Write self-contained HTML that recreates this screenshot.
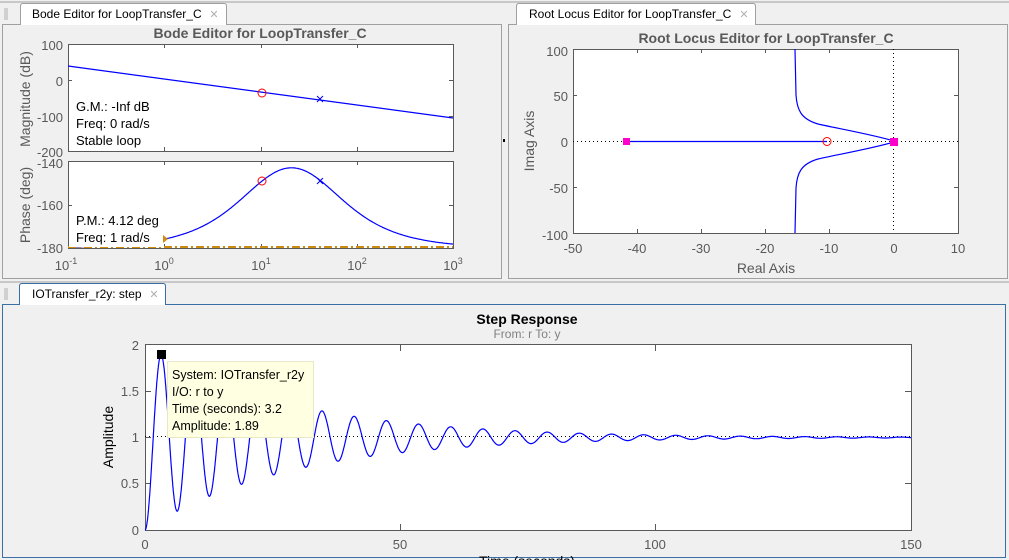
<!DOCTYPE html>
<html><head><meta charset="utf-8"><style>
html,body{margin:0;padding:0;width:1009px;height:560px;overflow:hidden;background:#f0f0f0}
svg{display:block;font-family:"Liberation Sans",sans-serif}
</style></head><body>
<svg width="1009" height="560" viewBox="0 0 1009 560" xmlns="http://www.w3.org/2000/svg">
<rect width="1009" height="560" fill="#f0f0f0"/>
<line x1="0" y1="2" x2="505" y2="2" stroke="#a0a0a0"/>
<rect x="2.5" y="24.5" width="499" height="254" fill="#f0f0f0" stroke="#a0a0a0"/>
<g stroke="#b0b0b0"><line x1="5" y1="8" x2="5" y2="20"/><line x1="7" y1="8" x2="7" y2="20"/></g>
<path d="M20.5,25 V6 Q20.5,3.5 23,3.5 H224 Q226.5,3.5 226.5,6 V25" fill="#fff" stroke="#a0a0a0"/>
<text x="32" y="18" font-size="12" fill="#000">Bode Editor for LoopTransfer_C</text>
<text x="214" y="18" font-size="11" fill="#b0b0b0" text-anchor="middle">✕</text>
<text x="260" y="38" font-size="14" font-weight="bold" fill="#595959" text-anchor="middle">Bode Editor for LoopTransfer_C</text>
<rect x="68.5" y="44.5" width="385" height="107" fill="#fff" stroke="#595959"/>
<rect x="68.5" y="161.5" width="385" height="87" fill="#fff" stroke="#595959"/>
<g stroke="#595959">
<line x1="164.5" y1="44" x2="164.5" y2="48"/><line x1="261.5" y1="44" x2="261.5" y2="48"/><line x1="357.5" y1="44" x2="357.5" y2="48"/>
<line x1="164.5" y1="151" x2="164.5" y2="147"/><line x1="261.5" y1="151" x2="261.5" y2="147"/><line x1="357.5" y1="151" x2="357.5" y2="147"/>
<line x1="164.5" y1="161" x2="164.5" y2="165"/><line x1="261.5" y1="161" x2="261.5" y2="165"/><line x1="357.5" y1="161" x2="357.5" y2="165"/>
<line x1="164.5" y1="248" x2="164.5" y2="244"/><line x1="261.5" y1="248" x2="261.5" y2="244"/><line x1="357.5" y1="248" x2="357.5" y2="244"/>
<line x1="68" y1="80.5" x2="72" y2="80.5"/><line x1="68" y1="116.5" x2="72" y2="116.5"/><line x1="453" y1="80.5" x2="449" y2="80.5"/><line x1="453" y1="116.5" x2="449" y2="116.5"/>
<line x1="68" y1="205.5" x2="72" y2="205.5"/><line x1="453" y1="205.5" x2="449" y2="205.5"/>
</g>
<g font-size="13" fill="#595959" text-anchor="end">
<text x="63" y="50">100</text><text x="63" y="86">0</text><text x="63" y="122">-100</text><text x="63" y="157">-200</text>
<text x="63" y="168">-140</text><text x="63" y="210">-160</text><text x="63" y="253">-180</text>
</g>
<g font-size="13" fill="#595959" text-anchor="middle">
<text x="66" y="270">10<tspan font-size="9" dy="-6">-1</tspan></text>
<text x="164" y="270">10<tspan font-size="9" dy="-6">0</tspan></text>
<text x="261" y="270">10<tspan font-size="9" dy="-6">1</tspan></text>
<text x="357" y="270">10<tspan font-size="9" dy="-6">2</tspan></text>
<text x="453" y="270">10<tspan font-size="9" dy="-6">3</tspan></text>
</g>
<text transform="translate(30,99) rotate(-90)" font-size="14" fill="#595959" text-anchor="middle">Magnitude (dB)</text>
<text transform="translate(30,205) rotate(-90)" font-size="14" fill="#595959" text-anchor="middle">Phase (deg)</text>
<line x1="68" y1="66" x2="453" y2="118" stroke="#0000ff" stroke-width="1.2"/>
<path id="phase" d="" fill="none" stroke="#0000ff" stroke-width="1.2"/>
<line x1="68" y1="247" x2="453" y2="247" stroke="#d08a10" stroke-width="2" stroke-dasharray="8,3,2,3"/>
<rect x="69" y="94" width="85" height="57" fill="#fff"/>
<rect x="69" y="209" width="95" height="38" fill="#fff"/>
<path d="M163,235 L168,239 L163,243Z" fill="#d08a10"/>
<g font-size="13" fill="#000">
<text x="76" y="111">G.M.: -Inf dB</text><text x="76" y="128">Freq: 0 rad/s</text><text x="76" y="145">Stable loop</text>
<text x="76" y="225">P.M.: 4.12 deg</text><text x="76" y="242">Freq: 1 rad/s</text>
</g>
<circle cx="262" cy="93" r="4" fill="none" stroke="#ff0000"/>
<path d="M317,96 l6,6 m0,-6 l-6,6" stroke="#0000ff"/>
<circle cx="262" cy="181" r="4" fill="none" stroke="#ff0000"/>
<path d="M317,178 l6,6 m0,-6 l-6,6" stroke="#0000ff"/>
<rect x="503" y="139" width="2" height="3" fill="#000"/>

<line x1="505" y1="2" x2="1009" y2="2" stroke="#a0a0a0"/>
<rect x="508.5" y="24.5" width="499" height="254" fill="#f0f0f0" stroke="#a0a0a0"/>
<path d="M516.5,25 V6 Q516.5,3.5 519,3.5 H753 Q755.5,3.5 755.5,6 V25" fill="#fff" stroke="#a0a0a0"/>
<text x="529" y="18" font-size="12" fill="#000">Root Locus Editor for LoopTransfer_C</text>
<text x="744" y="18" font-size="11" fill="#b0b0b0" text-anchor="middle">✕</text>
<text x="766" y="43" font-size="14" font-weight="bold" fill="#595959" text-anchor="middle">Root Locus Editor for LoopTransfer_C</text>
<rect x="573.5" y="49.5" width="385" height="184" fill="#fff" stroke="#595959"/>
<g stroke="#595959">
<line x1="637.5" y1="49" x2="637.5" y2="53"/><line x1="701.5" y1="49" x2="701.5" y2="53"/><line x1="765.5" y1="49" x2="765.5" y2="53"/><line x1="829.5" y1="49" x2="829.5" y2="53"/>
<line x1="637.5" y1="233" x2="637.5" y2="229"/><line x1="701.5" y1="233" x2="701.5" y2="229"/><line x1="765.5" y1="233" x2="765.5" y2="229"/><line x1="829.5" y1="233" x2="829.5" y2="229"/>
<line x1="573" y1="95.5" x2="577" y2="95.5"/><line x1="573" y1="187.5" x2="577" y2="187.5"/><line x1="958" y1="95.5" x2="954" y2="95.5"/><line x1="958" y1="187.5" x2="954" y2="187.5"/>
</g>
<line x1="573" y1="141.5" x2="958" y2="141.5" stroke="#000" stroke-dasharray="1,3"/>
<line x1="893.5" y1="49" x2="893.5" y2="233" stroke="#000" stroke-dasharray="1,3"/>
<g font-size="13" fill="#595959" text-anchor="end">
<text x="568" y="56">100</text><text x="568" y="101">50</text><text x="568" y="147">0</text><text x="568" y="193">-50</text><text x="568" y="240">-100</text>
</g>
<g font-size="13" fill="#595959" text-anchor="middle">
<text x="573" y="253">-50</text><text x="637" y="253">-40</text><text x="701" y="253">-30</text><text x="765" y="253">-20</text><text x="829" y="253">-10</text><text x="894" y="253">0</text><text x="958" y="253">10</text>
</g>
<text x="766" y="273" font-size="14" fill="#595959" text-anchor="middle">Real Axis</text>
<text transform="translate(534,141) rotate(-90)" font-size="14" fill="#595959" text-anchor="middle">Imag Axis</text>
<line x1="627" y1="141.5" x2="827" y2="141.5" stroke="#0000ff" stroke-width="1.2"/>
<path d="M894,141 C870,134 835,128 818,124 C801,119 797,110 796,95 L795,49" fill="none" stroke="#0000ff" stroke-width="1.2"/>
<path d="M894,142 C870,149 835,155 818,159 C801,164 797,173 796,188 L795,233" fill="none" stroke="#0000ff" stroke-width="1.2"/>
<circle cx="827" cy="141.5" r="4" fill="none" stroke="#ff0000"/>
<rect x="623" y="138" width="7" height="7" fill="#ff00cc"/>
<rect x="890" y="138" width="8" height="8" fill="#ff00cc"/>

<line x1="0" y1="282" x2="1009" y2="282" stroke="#a0a0a0"/>
<g stroke="#b0b0b0"><line x1="5" y1="288" x2="5" y2="300"/><line x1="7" y1="288" x2="7" y2="300"/></g>
<rect x="2.5" y="304.5" width="1003" height="253" fill="#f0f0f0" stroke="#3a6ea5"/>
<path d="M19.5,305 V286 Q19.5,283.5 22,283.5 H163 Q165.5,283.5 165.5,286 V305" fill="#fff" stroke="#3a6ea5"/>
<line x1="20" y1="304.5" x2="165" y2="304.5" stroke="#fff"/>
<text x="32" y="298" font-size="12" fill="#000">IOTransfer_r2y: step</text>
<text x="154" y="298" font-size="11" fill="#b0b0b0" text-anchor="middle">✕</text>
<text x="527" y="324" font-size="14" font-weight="bold" fill="#000" text-anchor="middle">Step Response</text>
<text x="527" y="338" font-size="12" fill="#808080" text-anchor="middle">From: r  To: y</text>
<rect x="145.5" y="344.5" width="766" height="186" fill="#fff" stroke="#595959"/>
<g stroke="#595959">
<line x1="400.5" y1="345" x2="400.5" y2="351"/><line x1="655.5" y1="345" x2="655.5" y2="351"/>
<line x1="400.5" y1="530" x2="400.5" y2="524"/><line x1="655.5" y1="530" x2="655.5" y2="524"/>
<line x1="145" y1="391.5" x2="151" y2="391.5"/><line x1="145" y1="437.5" x2="151" y2="437.5"/><line x1="145" y1="483.5" x2="151" y2="483.5"/>
<line x1="911" y1="391.5" x2="905" y2="391.5"/><line x1="911" y1="437.5" x2="905" y2="437.5"/><line x1="911" y1="483.5" x2="905" y2="483.5"/>
</g>
<line x1="145" y1="436.5" x2="911" y2="436.5" stroke="#000" stroke-dasharray="1,3"/>
<g font-size="13" fill="#595959" text-anchor="end">
<text x="139" y="350">2</text><text x="139" y="396">1.5</text><text x="139" y="442">1</text><text x="139" y="488">0.5</text><text x="139" y="535">0</text>
</g>
<g font-size="13" fill="#595959" text-anchor="middle">
<text x="145" y="549">0</text><text x="400" y="549">50</text><text x="655" y="549">100</text><text x="911" y="549">150</text>
</g>
<text x="527" y="566" font-size="14" fill="#000" text-anchor="middle">Time (seconds)</text>
<text transform="translate(113,437) rotate(-90)" font-size="14" fill="#000" text-anchor="middle">Amplitude</text>
<path id="step" d="" fill="none" stroke="#0000ff" stroke-width="1.2"/>
<rect x="167.5" y="361.5" width="146" height="76" fill="#ffffe1" stroke="#e8e8c8"/>
<g font-size="12.5" fill="#000">
<text x="172" y="379">System: IOTransfer_r2y</text><text x="172" y="396">I/O: r to y</text><text x="172" y="413">Time (seconds): 3.2</text><text x="172" y="430">Amplitude: 1.89</text>
</g>
<rect x="157" y="350" width="9" height="9" fill="#000"/>
</svg>
<script>
(function(){
var d="";
for(var i=0;i<=400;i++){
 var lw=-1+4*i/400, w=Math.pow(10,lw);
 var ph=-180+(Math.atan(w/10.5)-Math.atan(w/42))*180/Math.PI;
 var x=68+(lw+1)*96.25, y=161+(-140-ph)*2.175;
 d+=(i?"L":"M")+x.toFixed(1)+","+y.toFixed(1);
}
document.getElementById("phase").setAttribute("d",d);
var s="", a=0.036, wn=Math.PI/3.15;
for(var j=0;j<=3000;j++){
 var t=150*j/3000;
 var yv=1-Math.exp(-a*t)*(Math.cos(wn*t)+ (a/wn)*Math.sin(wn*t));
 var px=145+t*766/150, py=530-yv*92.5;
 s+=(j?"L":"M")+px.toFixed(1)+","+py.toFixed(1);
}
document.getElementById("step").setAttribute("d",s);
})();
</script>
</body></html>
